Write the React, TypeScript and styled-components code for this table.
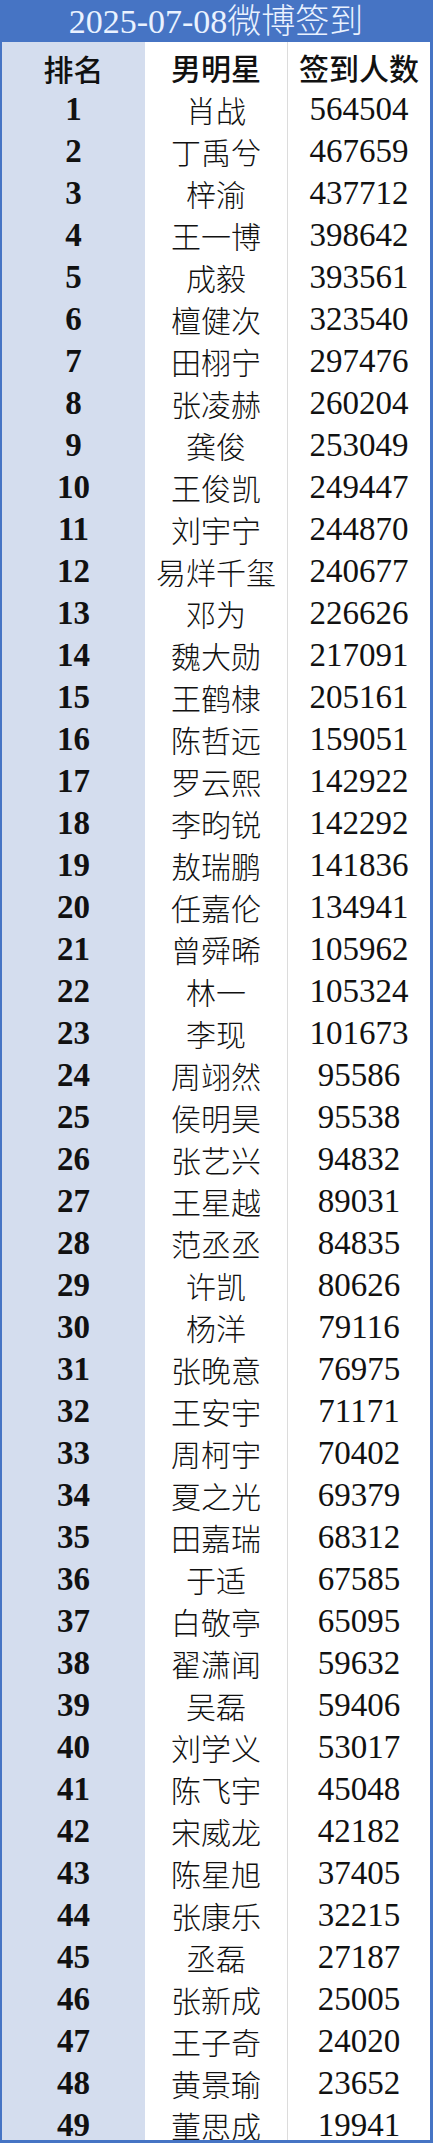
import styled, { createGlobalStyle } from 'styled-components';

const GlobalStyle = createGlobalStyle`
  html, body {
    margin: 0;
    padding: 0;
    background: #ffffff;
  }
`;

const Frame = styled.div`
  width: 433px;
  height: 2143px;
  box-sizing: border-box;
  border-left: 2px solid #4674c4;
  border-right: 3px solid #4674c4;
  border-bottom: 3px solid #4674c4;
  overflow: hidden;
  font-family: 'Liberation Serif', 'Noto Sans CJK SC', serif;
  color: #111111;
  background: #ffffff;
`;

const Title = styled.div`
  height: 42px;
  background: #4674c4;
  color: #eaf2ff;
  font-size: 34px;
  font-weight: 300;
  line-height: 44px;
  text-align: center;
`;

const Row = styled.div`
  display: grid;
  grid-template-columns: 143px 143px 1fr;
  height: 42px;
`;

const Cell = styled.div<{ $rank?: boolean; $head?: boolean; $last?: boolean }>`
  display: flex;
  align-items: center;
  justify-content: center;
  box-sizing: border-box;
  padding-top: 3px;
  font-size: 30px;
  font-weight: ${(p) => (p.$head ? 500 : p.$rank ? 700 : 300)};
  background: ${(p) => (p.$rank ? '#d4ddee' : '#ffffff')};
  border-bottom: ${(p) => (p.$rank ? 'none' : '1px solid #dcdcdc')};
  border-right: ${(p) => (p.$rank || p.$last ? 'none' : '1px solid #dcdcdc')};
`;

const Num = styled.span`
  font-size: 33px;
  font-weight: inherit;
`;

const rows: [string, number][] = [
  ['肖战', 564504],
  ['丁禹兮', 467659],
  ['梓渝', 437712],
  ['王一博', 398642],
  ['成毅', 393561],
  ['檀健次', 323540],
  ['田栩宁', 297476],
  ['张凌赫', 260204],
  ['龚俊', 253049],
  ['王俊凯', 249447],
  ['刘宇宁', 244870],
  ['易烊千玺', 240677],
  ['邓为', 226626],
  ['魏大勋', 217091],
  ['王鹤棣', 205161],
  ['陈哲远', 159051],
  ['罗云熙', 142922],
  ['李昀锐', 142292],
  ['敖瑞鹏', 141836],
  ['任嘉伦', 134941],
  ['曾舜晞', 105962],
  ['林一', 105324],
  ['李现', 101673],
  ['周翊然', 95586],
  ['侯明昊', 95538],
  ['张艺兴', 94832],
  ['王星越', 89031],
  ['范丞丞', 84835],
  ['许凯', 80626],
  ['杨洋', 79116],
  ['张晚意', 76975],
  ['王安宇', 71171],
  ['周柯宇', 70402],
  ['夏之光', 69379],
  ['田嘉瑞', 68312],
  ['于适', 67585],
  ['白敬亭', 65095],
  ['翟潇闻', 59632],
  ['吴磊', 59406],
  ['刘学义', 53017],
  ['陈飞宇', 45048],
  ['宋威龙', 42182],
  ['陈星旭', 37405],
  ['张康乐', 32215],
  ['丞磊', 27187],
  ['张新成', 25005],
  ['王子奇', 24020],
  ['黄景瑜', 23652],
  ['董思成', 19941],
];

export default function App() {
  return (
    <>
      <GlobalStyle />
      <Frame>
        <Title>2025-07-08微博签到</Title>
        <Row>
          <Cell $rank $head>排名</Cell>
          <Cell $head>男明星</Cell>
          <Cell $head $last>签到人数</Cell>
        </Row>
        {rows.map(([name, count], i) => (
          <Row key={name}>
            <Cell $rank>
              <Num>{i + 1}</Num>
            </Cell>
            <Cell>{name}</Cell>
            <Cell $last>
              <Num>{count}</Num>
            </Cell>
          </Row>
        ))}
      </Frame>
    </>
  );
}
